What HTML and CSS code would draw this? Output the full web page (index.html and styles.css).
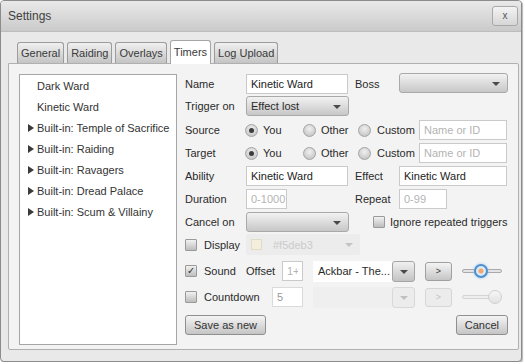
FILE: index.html
```html
<!DOCTYPE html>
<html lang="en">
<head>
    <meta charset="UTF-8">
    <meta name="viewport" content="width=device-width, initial-scale=1.0">
    <title>Settings</title>
    <link rel="stylesheet" href="styles.css">
</head>
<body>

<div class="window">
    <div class="titlebar">
        <span class="title">Settings</span>
        <button class="close">x</button>
    </div>

    <div class="tabs">
        <div class="tab">General</div>
        <div class="tab">Raiding</div>
        <div class="tab">Overlays</div>
        <div class="tab active">Timers</div>
        <div class="tab">Log Upload</div>
    </div>

    <div class="panel">
        <ul class="tree">
            <li>Dark Ward</li>
            <li>Kinetic Ward</li>
            <li class="group">Built-in: Temple of Sacrifice</li>
            <li class="group">Built-in: Raiding</li>
            <li class="group">Built-in: Ravagers</li>
            <li class="group">Built-in: Dread Palace</li>
            <li class="group">Built-in: Scum &amp; Villainy</li>
        </ul>

        <div class="form">
            <div class="row">
                <span class="lbl">Name</span>
                <input class="field main" type="text" value="Kinetic Ward">
                <span class="lbl2">Boss</span>
                <div class="select boss"></div>
            </div>

            <div class="row gap-tight">
                <span class="lbl">Trigger on</span>
                <div class="select main">Effect lost</div>
            </div>

            <div class="row gap-wide">
                <span class="lbl">Source</span>
                <label class="opt you"><span class="radio checked"></span>You</label>
                <label class="opt other"><span class="radio"></span>Other</label>
                <label class="opt custom"><span class="radio"></span>Custom</label>
                <input class="field id" type="text" placeholder="Name or ID">
            </div>

            <div class="row">
                <span class="lbl">Target</span>
                <label class="opt you"><span class="radio checked"></span>You</label>
                <label class="opt other"><span class="radio"></span>Other</label>
                <label class="opt custom"><span class="radio"></span>Custom</label>
                <input class="field id" type="text" placeholder="Name or ID">
            </div>

            <div class="row">
                <span class="lbl">Ability</span>
                <input class="field main" type="text" value="Kinetic Ward">
                <span class="lbl2">Effect</span>
                <input class="field wide" type="text" value="Kinetic Ward">
            </div>

            <div class="row">
                <span class="lbl">Duration</span>
                <div class="main">
                    <input class="field duration" type="text" placeholder="0-1000">
                </div>
                <span class="lbl2">Repeat</span>
                <input class="field repeat" type="text" placeholder="0-99">
            </div>

            <div class="row">
                <span class="lbl">Cancel on</span>
                <div class="select cancel"></div>
                <label class="ignore"><span class="check"></span>Ignore repeated triggers</label>
            </div>

            <div class="row display-row gap-tight">
                <label class="check-row"><span class="check"></span><span class="check-label">Display</span></label>
                <div class="color-pick">
                    <span class="swatch"></span>
                    <span class="hex">#f5deb3</span>
                </div>
            </div>

            <div class="row gap-sound">
                <div class="lead">
                    <label class="check-row"><span class="check checked">&#10003;</span><span class="check-label">Sound</span></label>
                    <span>Offset</span>
                    <input class="field offset" type="text" placeholder="1+">
                </div>
                <div class="combo">
                    <span class="combo-text">Ackbar - The...</span>
                    <span class="combo-drop"></span>
                </div>
                <button class="btn small">&gt;</button>
                <div class="slider"><span class="thumb" style="left: 12px"></span></div>
            </div>

            <div class="row gap-sound">
                <div class="lead">
                    <label class="check-row"><span class="check"></span><span class="check-label">Countdown</span></label>
                    <input class="field offset count" type="text" value="5" disabled>
                </div>
                <div class="combo disabled">
                    <span class="combo-text"></span>
                    <span class="combo-drop"></span>
                </div>
                <button class="btn small" disabled>&gt;</button>
                <div class="slider disabled"><span class="thumb" style="left: 26px"></span></div>
            </div>

            <div class="actions">
                <button class="btn">Save as new</button>
                <button class="btn">Cancel</button>
            </div>
        </div>
    </div>
</div>

</body>
</html>
```

FILE: styles.css
```css
body {
    margin: 0;
    background-color: #ffffff;
    font-family: "Liberation Sans", Arial, sans-serif;
    font-size: 11px;
    color: #2a2a2a;
}
.window {
    width: 520px;
    height: 360px;
    border: 1px solid #8c8c8c;
    border-radius: 4px;
    background-color: #e9e9e9;
    display: flex;
    flex-direction: column;
    overflow: hidden;
    box-shadow: 1px 1px 1px #b5b5b5;
}
.titlebar {
    height: 30px;
    flex: none;
    display: flex;
    align-items: center;
    justify-content: space-between;
    padding: 0 3px 0 7px;
    background: linear-gradient(#e9e9e9, #cacaca);
    border-bottom: 1px solid #bdbdbd;
}
.title {
    font-size: 12px;
    color: #404040;
}
.close {
    width: 26px;
    height: 20px;
    margin-top: -1px;
    border: 1px solid #a8a8a8;
    border-radius: 3px;
    background: linear-gradient(#f3f3f3, #d6d6d6);
    font-family: inherit;
    font-size: 10px;
    color: #555555;
    padding: 0;
}

/* tabs */
.tabs {
    display: flex;
    align-items: flex-end;
    gap: 3px;
    height: 21px;
    margin: 10px 0 0 16px;
    position: relative;
    z-index: 1;
}
.tab {
    height: 20px;
    line-height: 20px;
    padding: 0 3px;
    border: 1px solid #9c9c9c;
    border-bottom: none;
    border-radius: 3px 3px 0 0;
    background: linear-gradient(#f0f0f0, #c4c4c4);
    color: #3a3a3a;
}
.tab.active {
    height: 23px;
    line-height: 22px;
    margin-bottom: -1px;
    background: #ffffff;
    border-color: #a5a5a5;
}

/* main panel */
.panel {
    display: flex;
    height: 272px;
    margin: 0 2px 0 7px;
    padding: 10px 10px 3px 10px;
    border: 1px solid #b0b0b0;
    border-radius: 0 2px 2px 2px;
    background-color: #f3f3f3;
}
.tree {
    width: 156px;
    height: 268px;
    flex: none;
    margin: 0;
    padding: 1px 0 0 0;
    list-style: none;
    background: #ffffff;
    border: 1px solid #a6a6a6;
}
.tree li {
    height: 21px;
    line-height: 21px;
    padding-left: 17px;
    color: #333333;
    position: relative;
}
.tree li.group::before {
    content: "";
    position: absolute;
    left: 8px;
    top: 6px;
    border-left: 6px solid #3a3a3a;
    border-top: 4px solid transparent;
    border-bottom: 4px solid transparent;
}

/* form */
.form {
    flex: 1;
    margin-left: 8px;
    display: flex;
    flex-direction: column;
    gap: 3px;
}
.row {
    display: flex;
    align-items: center;
    height: 20px;
}
.row.gap-tight { margin-top: -1px; }
.row.gap-wide { margin-top: 1px; }
.row.gap-sound { margin-top: 3px; }
.display-row { height: 21px; }
.lbl {
    width: 61px;
    flex: none;
}
.lbl2 {
    width: 44px;
    flex: none;
    margin-left: 7px;
}
.main {
    width: 102px;
    flex: none;
}
.field {
    height: 20px;
    box-sizing: border-box;
    border: 1px solid #cacaca;
    background: #ffffff;
    font-family: inherit;
    font-size: 11px;
    color: #222222;
    padding: 0 4px;
    outline: none;
}
.field::placeholder {
    color: #b4b4b4;
}
.field.id { width: 88px; }
.field.wide { width: 108px; }
.field.duration { width: 41px; display: block; padding: 0 0 0 4px; }
.field.repeat { width: 48px; }
.field.offset { width: 21px; margin-left: auto; }
.field.count { width: 31px; color: #9a9a9a; background: #ffffff; border-color: #dadada; }

.select {
    height: 20px;
    box-sizing: border-box;
    border: 1px solid #a9a9a9;
    border-radius: 3px;
    background: linear-gradient(#f2f2f2, #c7c7c7);
    line-height: 18px;
    padding-left: 4px;
    position: relative;
}
.select::after {
    content: "";
    position: absolute;
    right: 7px;
    top: 8px;
    border-top: 4px solid #4a4a4a;
    border-left: 4px solid transparent;
    border-right: 4px solid transparent;
}
.select.boss { width: 109px; margin-top: -2px; }
.select.main { width: 103px; }
.select.cancel { width: 103px; }

.opt {
    display: flex;
    align-items: center;
    gap: 5px;
    flex: none;
}
.opt.you { width: 58px; margin-left: -1px; }
.opt.other { width: 55px; }
.opt.custom { width: 61px; gap: 6px; }
.radio {
    width: 11px;
    height: 11px;
    border: 1px solid #a3a3a3;
    border-radius: 50%;
    background: radial-gradient(circle at 50% 35%, #f0f0f0, #bcbcbc);
    position: relative;
}
.radio.checked::after {
    content: "";
    position: absolute;
    left: 3px;
    top: 3px;
    width: 5px;
    height: 5px;
    border-radius: 50%;
    background: #3c3c3c;
}

.ignore {
    display: flex;
    align-items: center;
    gap: 5px;
    margin-left: 24px;
}
.check-row {
    display: flex;
    align-items: center;
    gap: 7px;
}
.check-label {
    min-width: 42px;
}
.check {
    width: 10px;
    height: 10px;
    border: 1px solid #9a9a9a;
    border-radius: 1px;
    background: linear-gradient(#f1f1f1, #bdbdbd);
    font-size: 10px;
    line-height: 10px;
    text-align: center;
    color: #333333;
}

.color-pick {
    width: 114px;
    height: 21px;
    box-sizing: border-box;
    display: flex;
    align-items: center;
    padding-left: 5px;
    background: #ececec;
    border-radius: 2px;
    position: relative;
}
.color-pick::after {
    content: "";
    position: absolute;
    right: 7px;
    top: 9px;
    border-top: 4px solid #c4c4c4;
    border-left: 4px solid transparent;
    border-right: 4px solid transparent;
}
.swatch {
    width: 9px;
    height: 9px;
    border: 1px solid #e0dcc8;
    background: #f4efdc;
}
.hex {
    margin-left: 11px;
    color: #cbcbcb;
}

.lead {
    width: 118px;
    flex: none;
    display: flex;
    align-items: center;
}
.combo {
    width: 102px;
    height: 21px;
    margin-left: 10px;
    display: flex;
    flex: none;
}
.combo-text {
    flex: 1;
    background: #ffffff;
    line-height: 21px;
    padding-left: 5px;
    white-space: nowrap;
    overflow: hidden;
}
.combo-drop {
    width: 23px;
    box-sizing: border-box;
    border: 1px solid #a5a5a5;
    border-radius: 3px;
    background: linear-gradient(#f0f0f0, #c3c3c3);
    position: relative;
}
.combo-drop::after {
    content: "";
    position: absolute;
    left: 7px;
    top: 8px;
    border-top: 4px solid #4a4a4a;
    border-left: 4px solid transparent;
    border-right: 4px solid transparent;
}
.combo.disabled .combo-text {
    background: #efefef;
}
.combo.disabled .combo-drop {
    background: #ececec;
    border-color: #d8d8d8;
}
.combo.disabled .combo-drop::after {
    border-top-color: #c0c0c0;
}

.btn {
    height: 20px;
    padding: 0 8px;
    border: 1px solid #8f8f8f;
    border-radius: 3px;
    background: linear-gradient(#f4f4f4, #c5c5c5);
    font-family: inherit;
    font-size: 11px;
    color: #333333;
}
.btn.small {
    width: 27px;
    height: 19px;
    padding: 0;
    margin-left: 10px;
    font-size: 9px;
    border-color: #a0a0a0;
}
.btn:disabled {
    background: #ececec;
    border-color: #d6d6d6;
    color: #c2c2c2;
}

.slider {
    width: 40px;
    height: 14px;
    margin-left: 10px;
    position: relative;
}
.slider::before {
    content: "";
    position: absolute;
    left: 0;
    right: 0;
    top: 5px;
    border: 1px solid #a9a9a9;
    border-radius: 2px;
    background: #e4e4e4;
    box-sizing: border-box;
    height: 4px;
}
.thumb {
    position: absolute;
    top: 0;
    width: 10px;
    height: 10px;
    border: 2px solid #4b8fcf;
    border-radius: 50%;
    background: radial-gradient(circle, #f5a66a 0, #f5a66a 2px, #dbe8f5 3px);
    box-shadow: 0 0 3px #9cc6ee;
}
.slider.disabled::before {
    border-color: #d4d4d4;
    background: #eeeeee;
}
.slider.disabled .thumb {
    border: 1px solid #cfcfcf;
    width: 12px;
    height: 12px;
    background: linear-gradient(#f6f6f6, #e2e2e2);
    box-shadow: none;
}

.actions {
    display: flex;
    justify-content: space-between;
    margin-top: 5px;
}
```
